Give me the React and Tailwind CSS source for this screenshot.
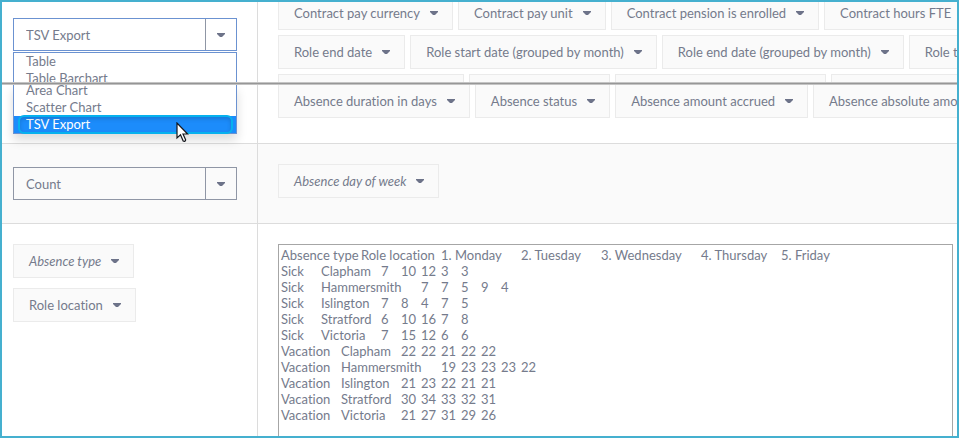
import React from "react";

const topFields = [
  "Contract pay currency",
  "Contract pay unit",
  "Contract pension is enrolled",
  "Contract hours FTE",
];

const roleFields = [
  "Role end date",
  "Role start date (grouped by month)",
  "Role end date (grouped by month)",
  "Role type",
];

const absenceFields = [
  "Absence duration in days",
  "Absence status",
  "Absence amount accrued",
  "Absence absolute amount",
];

const tsv = [
  ["Absence type", "Role location", "1. Monday", "2. Tuesday", "3. Wednesday", "4. Thursday", "5. Friday"],
  ["Sick", "Clapham", 7, 10, 12, 3, 3],
  ["Sick", "Hammersmith", 7, 7, 5, 9, 4],
  ["Sick", "Islington", 7, 8, 4, 7, 5],
  ["Sick", "Stratford", 6, 10, 16, 7, 8],
  ["Sick", "Victoria", 7, 15, 12, 6, 6],
  ["Vacation", "Clapham", 22, 22, 21, 22, 22],
  ["Vacation", "Hammersmith", 19, 23, 23, 23, 22],
  ["Vacation", "Islington", 21, 23, 22, 21, 21],
  ["Vacation", "Stratford", 30, 34, 33, 32, 31],
  ["Vacation", "Victoria", 21, 27, 31, 29, 26],
]
  .map((row) => row.join("\t"))
  .join("\n");

function Caret() {
  return (
    <svg width="8" height="4" viewBox="0 0 8 4" className="shrink-0 fill-[#6d7389]" aria-hidden="true">
      <path d="M0 0h8v1L5 4H3L0 1z" />
    </svg>
  );
}

function Chip({ label, italic }) {
  return (
    <button
      type="button"
      className={`flex h-[34px] shrink-0 items-center gap-2 border border-[#ebebeb] bg-[#fafafa] pr-3 pl-[15px] whitespace-nowrap ${italic ? "italic" : ""}`}
    >
      {label}
      <span className="flex w-3 justify-center">
        <Caret />
      </span>
    </button>
  );
}

function ChipRow({ labels }) {
  return (
    <div className="flex gap-[5px]">
      {labels.map((label) => (
        <Chip key={label} label={label} />
      ))}
    </div>
  );
}

function Picker({ label, options, value, active }) {
  return (
    <div className={`flex h-[33px] border ${active ? "border-[#6b92d1]" : "border-[#8f96a5]"}`}>
      <select
        aria-label={label}
        defaultValue={value}
        className="min-w-0 flex-1 appearance-none bg-transparent px-3 outline-none"
      >
        {options.map((o) => (
          <option key={o}>{o}</option>
        ))}
      </select>
      <span className="flex w-[31px] items-center justify-center border-l border-[#8f96a5]">
        <Caret />
      </span>
    </div>
  );
}

function Pointer() {
  return (
    <svg width="13" height="21" viewBox="0 0 13 21" className="absolute top-[6px] left-[162px]" aria-hidden="true">
      <path
        d="M1 1v15l3.5-3.2 2.7 6.2c1.2.7 2.6 0 2.4-1.3L7 12h4.600z"
        fill="#fff"
        stroke="#15171c"
        strokeWidth="1.2"
      />
    </svg>
  );
}

export default function App() {
  return (
    <div className="flex h-screen flex-col overflow-hidden border-2 border-[#45b0cf] bg-white font-['Lato',sans-serif] text-[13px] leading-4 text-[#757b8c] [font-variant-ligatures:none]">
      <div className="flex h-20 shrink-0 overflow-hidden">
        <div className="w-64 shrink-0 border-r border-[#dcdcdc] pt-4 pr-5 pl-[11px]">
          <Picker
            label="Output"
            value="TSV Export"
            options={["Table", "Table Barchart", "Area Chart", "Scatter Chart", "TSV Export"]}
            active
          />
          <ul role="listbox" aria-label="Output types" className="mt-px border border-b-0 border-[#6b92d1] bg-white leading-[17px]">
            <li role="option" aria-selected="false" className="px-3">Table</li>
            <li role="option" aria-selected="false" className="px-3">Table Barchart</li>
          </ul>
        </div>
        <div className="min-w-0 flex-1 overflow-hidden pl-5">
          <div className="-mt-1.5 flex flex-col gap-[5px]">
            <ChipRow labels={topFields} />
            <ChipRow labels={roleFields} />
            <div className="flex h-[34px] gap-[5px]">
              <div className="w-[186px] shrink-0 border border-[#ebebeb] bg-[#fafafa]" />
              <div className="w-[141px] shrink-0 border border-[#ebebeb] bg-[#fafafa]" />
              <div className="w-[211px] shrink-0 border border-[#ebebeb] bg-[#fafafa]" />
              <div className="w-[211px] shrink-0 border border-[#ebebeb] bg-[#fafafa]" />
            </div>
          </div>
        </div>
      </div>

      <hr className="h-[3px] shrink-0 border-y border-[#c4c4c4] bg-[#979797]" />

      <div className="flex h-[58px] shrink-0">
        <div className="w-64 shrink-0 border-r border-[#dcdcdc] pr-5 pl-[11px]">
          <ul
            role="listbox"
            aria-label="More output types"
            className="relative z-10 border border-t-0 border-[#6b92d1] bg-white leading-[17px] shadow-[0_6px_10px_rgba(0,0,0,0.14)]"
          >
            <li role="option" aria-selected="false" className="flex h-3.5 items-end px-3">Area Chart</li>
            <li role="option" aria-selected="false" className="px-3">Scatter Chart</li>
            <li role="option" aria-selected="true" className="relative bg-[#1c8cfb] px-3 text-white">
              TSV Export
              <span className="absolute -inset-y-px right-[3px] left-1 rounded-md border-2 border-[#06b1ee] shadow-[inset_0_2px_4px_rgba(0,0,0,0.15)]" />
              <Pointer />
            </li>
          </ul>
        </div>
        <div className="min-w-0 flex-1 overflow-hidden pl-5">
          <div className="-mt-px">
            <ChipRow labels={absenceFields} />
          </div>
        </div>
      </div>

      <div className="flex shrink-0 border-y border-[#dcdcdc] bg-[#fafafa]">
        <div className="w-64 shrink-0 border-r border-[#dcdcdc] pt-[23px] pr-5 pb-[23px] pl-[11px]">
          <Picker label="Aggregate" value="Count" options={["Count", "Sum", "Average"]} />
        </div>
        <div className="flex flex-1 pt-5 pl-5">
          <Chip label="Absence day of week" italic />
        </div>
      </div>

      <div className="flex min-h-0 flex-1">
        <div className="flex w-64 shrink-0 flex-col items-start gap-2.5 border-r border-[#dcdcdc] pt-5 pl-[11px]">
          <Chip label="Absence type" italic />
          <Chip label="Role location" />
        </div>
        <div className="flex min-w-0 flex-1 overflow-hidden pt-5 pr-1 pl-5">
          <textarea
            aria-label="TSV output"
            readOnly
            defaultValue={tsv}
            className="min-h-full flex-1 resize-none overflow-hidden border border-b-0 border-[#a6a6a6] bg-white p-0.5 outline-none [tab-size:20px]"
          />
        </div>
      </div>
    </div>
  );
}
